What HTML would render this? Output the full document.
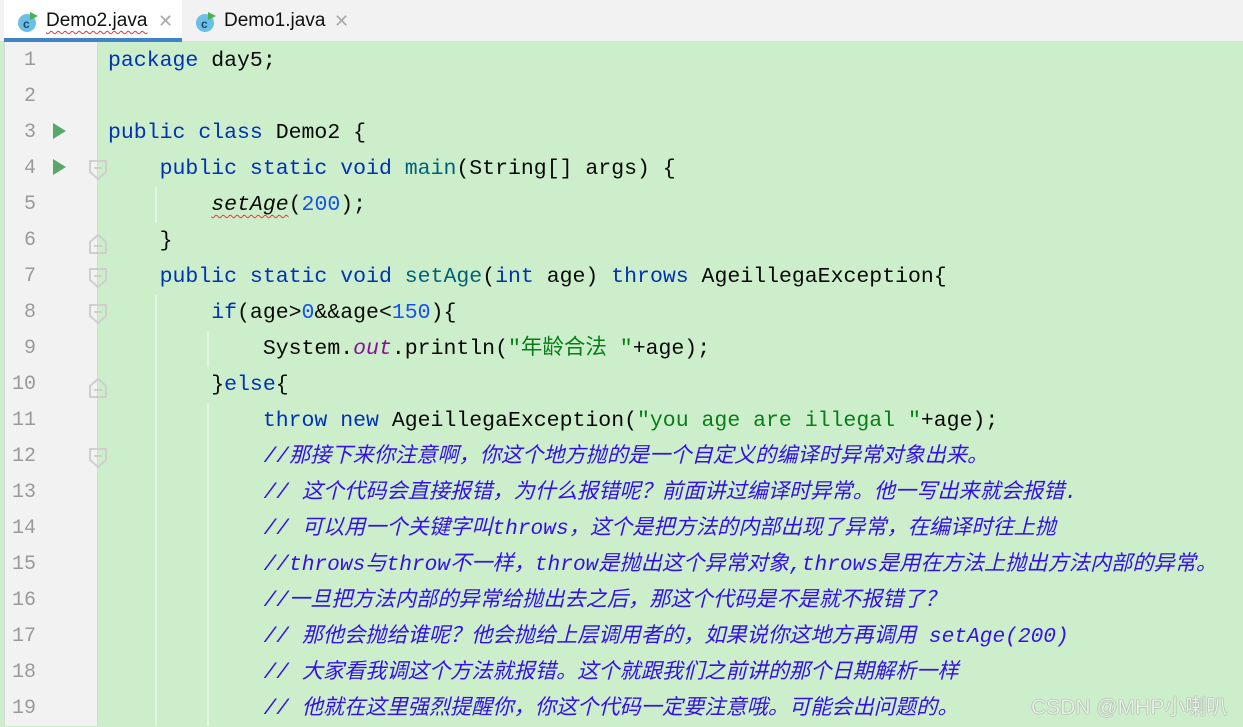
<!DOCTYPE html>
<html><head><meta charset="utf-8"><style>
*{margin:0;padding:0;box-sizing:border-box}
body{width:1243px;height:726px;overflow:hidden;background:#cdeecb;position:relative;font-family:"Liberation Mono","Noto Sans CJK SC",monospace}
#tabs{position:absolute;left:0;top:0;width:1243px;height:42px;background:#f2f2f2;border-bottom:1px solid #dcdcdc}
.tab{position:absolute;top:0;height:42px;font-family:"Liberation Sans",sans-serif;font-size:19px;color:#111;line-height:42px}
#gut{position:absolute;left:4px;top:42px;width:94px;height:684px;background:#f2f2f2;border-left:1px solid #d8d8d8;border-right:1px solid #d6d6d6}
.ln{position:absolute;left:0;width:36px;text-align:right;font-size:20px;color:#9a9a9a;height:36px;line-height:36px}
.run{position:absolute;left:53px;width:0;height:0;border-left:13px solid #59a869;border-top:8px solid transparent;border-bottom:8px solid transparent}
.code{position:absolute;left:108px;height:36px;line-height:36px;font-size:21.5px;white-space:pre;color:#080808}
.k{color:#0033b3}.s{color:#067d17}.n{color:#1750eb}.o{color:#871094;font-style:italic}.i{font-style:italic}
.c{color:#3311e6;font-style:italic;font-size:21.2px;left:111px}
.g{position:absolute;width:2px;background:#e4f4e2}
.sq{text-decoration:underline wavy #e33;text-underline-offset:4px;text-decoration-thickness:1px}
</style></head><body>
<div id="tabs">
 <div style="position:absolute;left:4px;top:0;width:178px;height:42px;background:#fff"></div>
 <div style="position:absolute;left:4px;top:38px;width:178px;height:4px;background:#4083c9"></div>
 <svg style="position:absolute;left:17px;top:11px" width="22" height="22"><circle cx="10" cy="12" r="9" fill="#6ac0e6"/><text x="6" y="17" font-size="12" font-family="Liberation Sans" font-weight="bold" fill="#1a4a66">c</text><path d="M13 1 L21 5 L13 9Z" fill="#4caf50"/></svg>
 <div class="tab" style="left:46px"><span class="sq">Demo2.java</span></div>
 <div class="tab" style="left:158px;color:#aaa;font-size:18px">✕</div>
 <svg style="position:absolute;left:195px;top:11px" width="22" height="22"><circle cx="10" cy="12" r="9" fill="#6ac0e6"/><text x="6" y="17" font-size="12" font-family="Liberation Sans" font-weight="bold" fill="#1a4a66">c</text><path d="M13 1 L21 5 L13 9Z" fill="#4caf50"/></svg>
 <div class="tab" style="left:224px">Demo1.java</div>
 <div class="tab" style="left:334px;color:#aaa;font-size:18px">✕</div>
</div>
<div id="gut"></div>
<div style="position:absolute;left:0;top:43px">
 <div class="ln" style="top:0">1</div><div class="ln" style="top:36px">2</div><div class="ln" style="top:72px">3</div><div class="ln" style="top:108px">4</div><div class="ln" style="top:144px">5</div><div class="ln" style="top:180px">6</div><div class="ln" style="top:216px">7</div><div class="ln" style="top:252px">8</div><div class="ln" style="top:288px">9</div><div class="ln" style="top:324px">10</div><div class="ln" style="top:360px">11</div><div class="ln" style="top:396px">12</div><div class="ln" style="top:432px">13</div><div class="ln" style="top:468px">14</div><div class="ln" style="top:504px">15</div><div class="ln" style="top:540px">16</div><div class="ln" style="top:576px">17</div><div class="ln" style="top:612px">18</div><div class="ln" style="top:648px">19</div>
 <div class="run" style="top:80px"></div><div class="run" style="top:116px"></div>
</div>
<svg style="position:absolute;left:87px;top:43px" width="22" height="684">
 <g fill="none" stroke="#cfcfcf" stroke-width="2">
  <path d="M3 118 H19 V129 L11 136 L3 129Z M7 125 H15"/>
  <path d="M3 210 V199 L11 192 L19 199 V210Z M7 203 H15"/>
  <path d="M3 226 H19 V237 L11 244 L3 237Z M7 233 H15"/>
  <path d="M3 262 H19 V273 L11 280 L3 273Z M7 269 H15"/>
  <path d="M3 354 V343 L11 336 L19 343 V354Z M7 347 H15"/>
  <path d="M3 406 H19 V417 L11 424 L3 417Z M7 413 H15"/>
 </g>
</svg>
<div class="g" style="left:155px;top:187px;height:36px"></div>
<div class="g" style="left:155px;top:295px;height:431px"></div>
<div class="g" style="left:207px;top:331px;height:36px"></div>
<div class="g" style="left:207px;top:403px;height:323px"></div>
<div class="code" style="top:43px"><span class="k">package</span> day5;</div>
<div class="code" style="top:115px"><span class="k">public class</span> Demo2 {</div>
<div class="code" style="top:151px">    <span class="k">public static void</span> <span style="color:#00627a">main</span>(String[] args) {</div>
<div class="code" style="top:187px">        <span class="i sq">setAge</span>(<span class="n">200</span>);</div>
<div class="code" style="top:223px">    }</div>
<div class="code" style="top:259px">    <span class="k">public static void</span> <span style="color:#00627a">setAge</span>(<span class="k">int</span> age) <span class="k">throws</span> AgeillegaException{</div>
<div class="code" style="top:295px">        <span class="k">if</span>(age&gt;<span class="n">0</span>&amp;&amp;age&lt;<span class="n">150</span>){</div>
<div class="code" style="top:331px">            System.<span class="o">out</span>.println(<span class="s">"年龄合法 "</span>+age);</div>
<div class="code" style="top:367px">        }<span class="k">else</span>{</div>
<div class="code" style="top:403px">            <span class="k">throw new</span> AgeillegaException(<span class="s">"you age are illegal "</span>+age);</div>
<div class="code c" style="top:439px">            //那接下来你注意啊，你这个地方抛的是一个自定义的编译时异常对象出来。</div>
<div class="code c" style="top:475px">            // 这个代码会直接报错，为什么报错呢？前面讲过编译时异常。他一写出来就会报错.</div>
<div class="code c" style="top:511px">            // 可以用一个关键字叫throws，这个是把方法的内部出现了异常，在编译时往上抛</div>
<div class="code c" style="top:547px">            //throws与throw不一样，throw是抛出这个异常对象,throws是用在方法上抛出方法内部的异常。</div>
<div class="code c" style="top:583px">            //一旦把方法内部的异常给抛出去之后，那这个代码是不是就不报错了？</div>
<div class="code c" style="top:619px">            // 那他会抛给谁呢？他会抛给上层调用者的，如果说你这地方再调用 setAge(200)</div>
<div class="code c" style="top:655px">            // 大家看我调这个方法就报错。这个就跟我们之前讲的那个日期解析一样</div>
<div class="code c" style="top:691px">            // 他就在这里强烈提醒你，你这个代码一定要注意哦。可能会出问题的。</div>
<div style="position:absolute;left:1031px;top:691px;font-family:'Liberation Sans','Noto Sans CJK SC',sans-serif;font-size:21px;color:#e8f0e8;text-shadow:0 0 1px #888,0 0 1px #888">CSDN @MHP小喇叭</div>
</body></html>
